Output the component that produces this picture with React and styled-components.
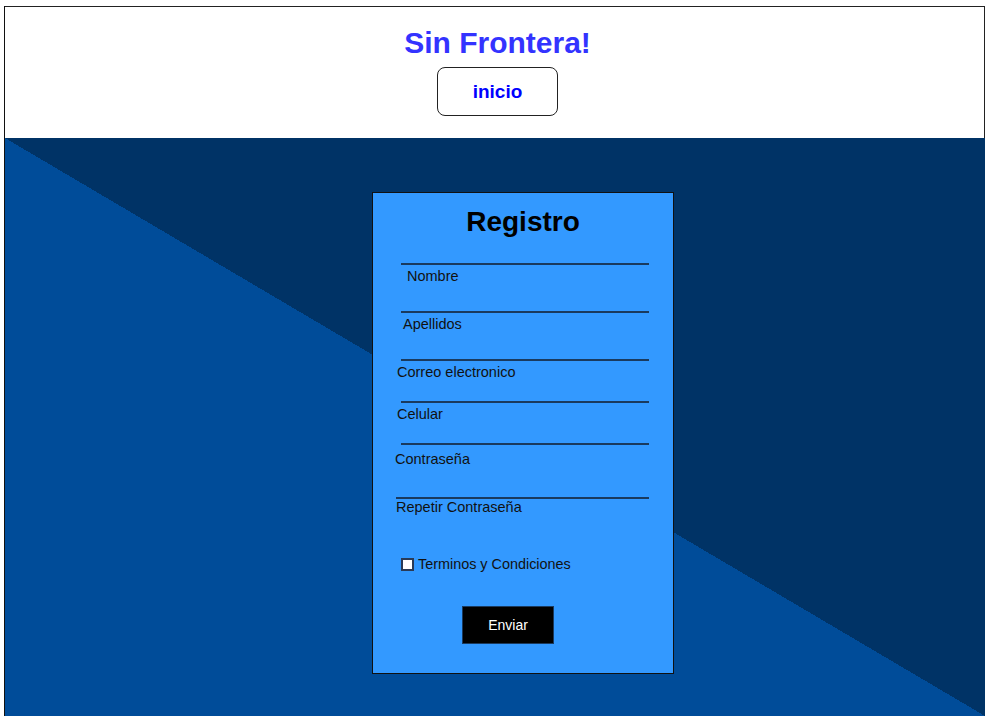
import React from "react"
import styled, { createGlobalStyle } from "styled-components"

const GlobalStyle = createGlobalStyle`
  html, body {
    margin: 0;
    padding: 0;
    background: #ffffff;
  }
  body {
    padding: 6px 2px 3px 4px;
    font-family: "Liberation Sans", Arial, sans-serif;
  }
`

const Page = styled.div`
  width: 981px;
  height: 710px;
  display: flex;
  flex-direction: column;
  box-sizing: border-box;
  border-left: 1px solid #111;
`

const Header = styled.header`
  height: 132px;
  box-sizing: border-box;
  background: #ffffff;
  border-top: 1px solid #222;
  border-right: 1px solid #222;
  display: flex;
  flex-direction: column;
  align-items: center;
  padding: 19px 0 0 6px;
`

const Title = styled.h1`
  margin: 0;
  font-size: 30px;
  line-height: 34px;
  font-weight: 700;
  color: #3333ff;
`

const HomeButton = styled.button`
  margin-top: 7px;
  width: 121px;
  height: 49px;
  box-sizing: border-box;
  border: 1px solid #222;
  border-radius: 8px;
  background: #ffffff;
  color: #0000ff;
  font-family: "Liberation Sans", Arial, sans-serif;
  font-weight: 700;
  font-size: 19px;
`

const Main = styled.main`
  flex: 1;
  display: flex;
  justify-content: center;
  padding-top: 54px;
  background: linear-gradient(to top right, #004c99 50%, #003366 50%);
`

const Card = styled.form`
  width: 302px;
  height: 482px;
  box-sizing: border-box;
  margin-left: 56px;
  background: #3399ff;
  border: 1px solid #111;
  display: flex;
  flex-direction: column;
  padding-top: 13px;
`

const CardTitle = styled.h2`
  margin: 0;
  text-align: center;
  font-size: 28px;
  line-height: 32px;
  font-weight: 700;
  color: #000;
`

const Field = styled.div`
  display: flex;
  flex-direction: column;
  margin-top: ${(p) => p.$top}px;
`

const Line = styled.input`
  align-self: flex-start;
  margin: 0 0 0 ${(p) => p.$start}px;
  width: ${(p) => p.$width}px;
  height: 20px;
  box-sizing: border-box;
  padding: 0;
  border: none;
  border-bottom: 2px solid #1a3a5e;
  background: transparent;
  outline: none;
`

const Label = styled.label`
  margin-top: ${(p) => p.$gap}px;
  padding-left: ${(p) => p.$indent}px;
  font-size: 14.5px;
  line-height: 16px;
  color: #111;
`

const CheckRow = styled.div`
  margin-top: 41px;
  padding-left: 28px;
  display: flex;
  align-items: center;
  gap: 4px;
  height: 16px;
  font-size: 14.4px;
  color: #111;
`

const Check = styled.input`
  appearance: none;
  margin: 0;
  width: 13px;
  height: 13px;
  box-sizing: border-box;
  border: 2px solid #2a3a55;
  background: #ffffff;
`

const SendButton = styled.button`
  margin: 34px 0 0 89px;
  width: 92px;
  height: 38px;
  box-sizing: border-box;
  border: 1px solid #1a3a5e;
  background: #000;
  color: #fff;
  font-family: "Liberation Sans", Arial, sans-serif;
  font-size: 14px;
`

const fields = [
  { label: "Nombre", top: 7, gap: 3, indent: 34, start: 28, width: 248 },
  { label: "Apellidos", top: 9, gap: 3, indent: 30, start: 28, width: 248 },
  { label: "Correo electronico", top: 9, gap: 3, indent: 24, start: 28, width: 248 },
  { label: "Celular", top: 3, gap: 3, indent: 24, start: 28, width: 248 },
  { label: "Contraseña", top: 3, gap: 6, indent: 22, start: 28, width: 248 },
  { label: "Repetir Contraseña", top: 12, gap: 0, indent: 23, start: 23, width: 253 },
]

export default function App() {
  return (
    <>
      <GlobalStyle />
      <Page>
        <Header>
          <Title>Sin Frontera!</Title>
          <HomeButton>inicio</HomeButton>
        </Header>
        <Main>
          <Card onSubmit={(e) => e.preventDefault()}>
            <CardTitle>Registro</CardTitle>
            {fields.map((f) => (
              <Field key={f.label} $top={f.top}>
                <Line $start={f.start} $width={f.width} />
                <Label $gap={f.gap} $indent={f.indent}>
                  {f.label}
                </Label>
              </Field>
            ))}
            <CheckRow>
              <Check type="checkbox" />
              <span>Terminos y Condiciones</span>
            </CheckRow>
            <SendButton type="submit">Enviar</SendButton>
          </Card>
        </Main>
      </Page>
    </>
  )
}
